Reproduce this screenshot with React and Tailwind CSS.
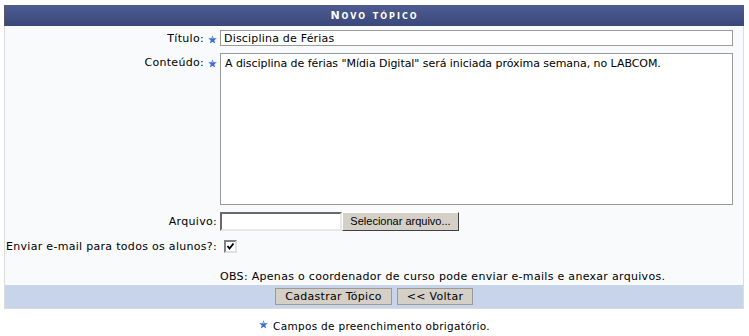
import { useState } from "react";

const Star = ({ className = "" }) => (
    <svg width="9" height="9" viewBox="0 0 10 10" className={className}>
        <polygon points="5,0.3 6.3,3.6 9.8,3.7 7,5.9 8,9.5 5,7.4 2,9.5 3,5.9 0.2,3.7 3.7,3.6" fill="#3d6fd0" />
        <polygon points="5,1.5 5.9,3.9 3.2,4.3 4.2,3.9" fill="#a9c4f2" />
    </svg>
);

const Label = ({ text, required, className = "" }) => (
    <div className={`flex justify-end items-start gap-[4px] pr-[2px] whitespace-nowrap ${className}`}>
        <span>{text}</span>
        {required && <Star className="mt-[3px] shrink-0" />}
    </div>
);

function App() {
    const [titulo, setTitulo] = useState("Disciplina de Férias")
    const [conteudo, setConteudo] = useState('A disciplina de férias "Mídia Digital" será iniciada próxima semana, no LABCOM.')
    const [enviar, setEnviar] = useState(true)

    return (
        <div className="w-[749px] h-[336px] bg-white text-[11px] leading-[13px] tracking-[0.3px] text-black font-['DejaVu_Sans',sans-serif]">
            <div className="ml-[4px] pt-[5px] w-[740px]">
                {/* header */}
                <div className="h-[21px] flex items-center justify-center bg-gradient-to-b from-[#4e5c92] to-[#3a477a] border-l border-[#5a5a5a] text-white font-bold [font-variant:small-caps] tracking-[2px]">
                    Novo tópico
                </div>

                {/* form body */}
                <div className="bg-[#f9fafc] border-x border-[#dcdcdc]">
                    <div className="grid grid-cols-[214px_1fr] pt-[4px]">
                        <Label text="Título:" required className="pt-[2px]" />
                        <div className="pl-px">
                            <input
                                value={titulo}
                                onChange={e => setTitulo(e.target.value)}
                                className="w-[513px] h-[16px] px-[3px] bg-white border border-[#9a9a9a] outline-none text-[11px] tracking-[0.2px] font-['DejaVu_Sans',sans-serif]"
                            />
                        </div>
                    </div>

                    <div className="grid grid-cols-[214px_1fr] mt-[7px]">
                        <Label text="Conteúdo:" required className="pt-[3px]" />
                        <div className="pl-px">
                            <textarea
                                value={conteudo}
                                onChange={e => setConteudo(e.target.value)}
                                className="block w-[513px] h-[152px] px-[4px] py-[3px] bg-white border border-[#9a9a9a] outline-none resize-none text-[11px] leading-[14px] tracking-[-0.05px] font-['DejaVu_Sans',sans-serif]"
                            />
                        </div>
                    </div>

                    <div className="grid grid-cols-[214px_1fr] mt-[7px] items-center">
                        <Label text="Arquivo:" />
                        <div className="pl-px flex">
                            <div className="w-[122px] h-[19px] bg-white border-2 border-t-[#6a6a6a] border-l-[#6a6a6a] border-b-[#e8e8e8] border-r-[#e8e8e8]" />
                            <button className="w-[117px] h-[19px] bg-[#d4d0c8] border border-t-white border-l-white border-b-[#404040] border-r-[#404040] text-[11px] tracking-normal font-['Liberation_Sans',sans-serif] leading-none">
                                Selecionar arquivo...
                            </button>
                        </div>
                    </div>

                    <div className="grid grid-cols-[214px_1fr] mt-[9px] items-center">
                        <Label text="Enviar e-mail para todos os alunos?:" className="pr-0" />
                        <div className="pl-[5px]">
                            <button
                                onClick={() => setEnviar(!enviar)}
                                className="w-[13px] h-[13px] bg-white border-2 border-t-[#808080] border-l-[#808080] border-b-[#e0e0e0] border-r-[#e0e0e0] flex items-center justify-center"
                            >
                                {enviar && (
                                    <svg width="9" height="9" viewBox="0 0 9 9">
                                        <path d="M1.5 4 L3.5 6.5 L7.5 1.5" stroke="#000" strokeWidth="1.8" fill="none" />
                                    </svg>
                                )}
                            </button>
                        </div>
                    </div>

                    <div className="grid grid-cols-[214px_1fr] mt-[17px] pb-[2px]">
                        <div />
                        <div className="pl-px whitespace-nowrap">OBS: Apenas o coordenador de curso pode enviar e-mails e anexar arquivos.</div>
                    </div>
                </div>

                {/* footer */}
                <div className="h-[24px] flex items-center justify-center gap-[5px] bg-[#c8d4ea] border-x border-b border-[#dcdcdc]">
                    <button className="w-[117px] h-[17px] bg-[#d4d0c8] border border-[#9a9a9a] text-[11px] leading-none">Cadastrar Tópico</button>
                    <button className="w-[76px] h-[17px] bg-[#d4d0c8] border border-[#9a9a9a] text-[11px] leading-none">&lt;&lt; Voltar</button>
                </div>
            </div>

            {/* footnote */}
            <div className="mt-[11px] flex justify-center items-center gap-[5px] text-[10.5px]">
                <Star className="-mt-[4px]" />
                <span>Campos de preenchimento obrigatório.</span>
            </div>
        </div>
    );
}

export default App
